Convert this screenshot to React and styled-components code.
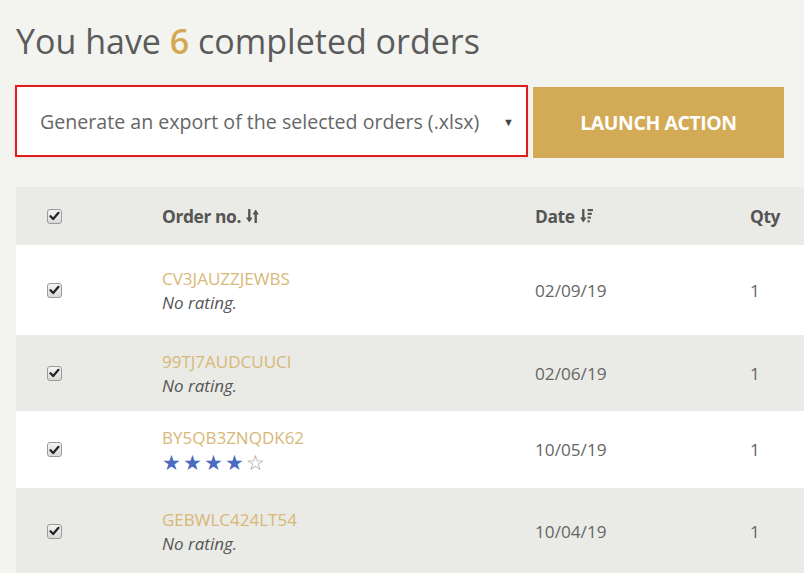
import styled, { createGlobalStyle } from "styled-components"

const Global = createGlobalStyle`
    body {
        margin: 0;
        background: #f3f3f0;
        font-family: "Open Sans", "Liberation Sans", sans-serif;
        overflow: hidden;
    }
`
const Page = styled.div`
    width: 804px;
    height: 573px;
    overflow: hidden;
    padding-top: 19px;
    box-sizing: border-box;
`
const Title = styled.h1`
    margin: 0 0 0 16px;
    font-size: 34px;
    font-weight: 400;
    color: #5b5b5b;
    line-height: 44px;
`
const Count = styled.span`
    color: #d4a852;
    font-weight: 600;
`
const Actions = styled.div`
    display: flex;
    align-items: flex-start;
    gap: 5px;
    margin: 22px 0 0 15px;
`
const Select = styled.div`
    box-sizing: border-box;
    width: 513px;
    height: 72px;
    border: 2px solid #e21b1b;
    background: #fff;
    display: flex;
    align-items: center;
    justify-content: space-between;
    padding: 0 12px 0 23px;
    font-size: 19.6px;
    color: #666;
    box-shadow: 0 1px 4px rgba(0,0,0,0.08);
`
const Caret = styled.span`
    font-size: 11px;
    color: #444;
`
const Button = styled.button`
    width: 251px;
    height: 71px;
    margin-top: 2px;
    border: none;
    background: #d3aa55;
    color: #fff;
    font-family: "Open Sans", "Liberation Sans", sans-serif;
    font-weight: 700;
    font-size: 19.4px;
    letter-spacing: -0.4px;
`
const Table = styled.div`
    margin: 29px 0 0 16px;
    width: 820px;
`
const Row = styled.div`
    display: grid;
    grid-template-columns: 146px 373px 215px 1fr;
    align-items: center;
    background: ${p => (p.white ? "#ffffff" : "#eaeae6")};
    height: ${p => p.h}px;
`
const Head = styled.div`
    font-weight: 700;
    font-size: 17.4px;
    letter-spacing: -0.4px;
    color: #555;
    display: flex;
    align-items: center;
    gap: 4px;
`
const CheckCell = styled.div`
    display: flex;
    padding-left: 31px;
`
const Box = styled.span`
    width: 13px;
    height: 13px;
    border: 1px solid #9a9a9a;
    border-radius: 3px;
    background: linear-gradient(#f4f4f4, #d9d9d9);
    display: flex;
    align-items: center;
    justify-content: center;
`
const Order = styled.div`
    display: flex;
    flex-direction: column;
    gap: 1px;
`
const Code = styled.div`
    color: #d8b877;
    font-size: 17px;
    line-height: 23px;
`
const Note = styled.div`
    font-style: italic;
    color: #555;
    font-size: 17px;
    line-height: 23px;
`
const Stars = styled.div`
    color: #4a6bbf;
    font-size: 21px;
    line-height: 24px;
    letter-spacing: 2px;
`
const Empty = styled.span`
    color: #999;
`
const Cell = styled.div`
    color: #666;
    font-size: 17.2px;
`

const Check = () => (
  <CheckCell>
    <Box>
      <svg width="11" height="10" viewBox="0 0 11 10">
        <path d="M1.5 5.2 L4.2 8 L9.5 1.8" stroke="#222" strokeWidth="2.2" fill="none" strokeLinecap="round" strokeLinejoin="round" />
      </svg>
    </Box>
  </CheckCell>
)

const SortBoth = () => (
  <svg width="15" height="18" viewBox="0 0 14 15">
    <path d="M4 1 V12" stroke="#555" strokeWidth="2.2" />
    <path d="M1 9 L4 13.5 L7 9 Z" fill="#555" />
    <path d="M10 3 V14" stroke="#555" strokeWidth="2.2" />
    <path d="M7 6 L10 1.5 L13 6 Z" fill="#555" />
  </svg>
)

const SortDesc = () => (
  <svg width="15" height="18" viewBox="0 0 14 15">
    <path d="M4 1 V12" stroke="#555" strokeWidth="2.2" />
    <path d="M1 9 L4 13.5 L7 9 Z" fill="#555" />
    <rect x="8" y="1" width="5" height="2" fill="#555" />
    <rect x="8" y="4.5" width="4" height="2" fill="#555" />
    <rect x="8" y="8" width="3" height="2" fill="#555" />
    <rect x="8" y="11.5" width="2" height="2" fill="#555" />
  </svg>
)

const orders = [
  { code: "CV3JAUZZJEWBS", date: "02/09/19", qty: 1, h: 90, white: true },
  { code: "99TJ7AUDCUUCI", date: "02/06/19", qty: 1, h: 76 },
  { code: "BY5QB3ZNQDK62", date: "10/05/19", qty: 1, h: 77, white: true, stars: 4 },
  { code: "GEBWLC424LT54", date: "10/04/19", qty: 1, h: 86 },
]

export default function App() {
  return (
    <Page>
      <Global />
      <Title>You have <Count>6</Count> completed orders</Title>
      <Actions>
        <Select>
          Generate an export of the selected orders (.xlsx)
          <Caret>▼</Caret>
        </Select>
        <Button>LAUNCH ACTION</Button>
      </Actions>
      <Table>
        <Row h={58}>
          <Check />
          <Head>Order no. <SortBoth /></Head>
          <Head>Date <SortDesc /></Head>
          <Head>Qty</Head>
        </Row>
        {orders.map(o => (
          <Row key={o.code} h={o.h} white={o.white}>
            <Check />
            <Order>
              <Code>{o.code}</Code>
              {o.stars ? (
                <Stars>★★★★<Empty>☆</Empty></Stars>
              ) : (
                <Note>No rating.</Note>
              )}
            </Order>
            <Cell>{o.date}</Cell>
            <Cell>{o.qty}</Cell>
          </Row>
        ))}
      </Table>
    </Page>
  )
}
